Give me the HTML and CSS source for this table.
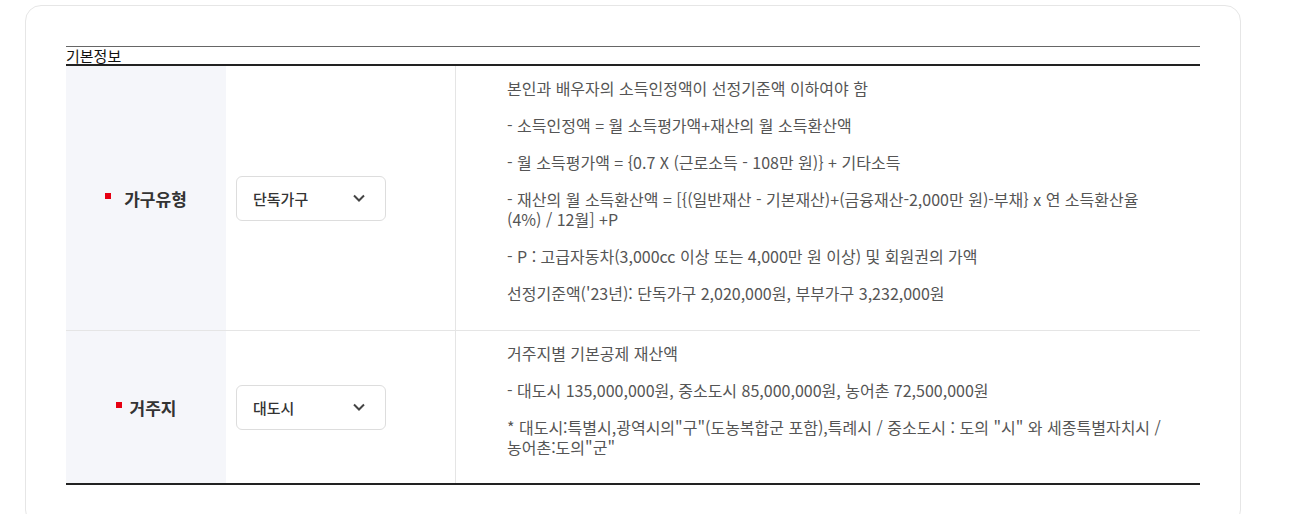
FILE: index.html
```html
<!DOCTYPE html>
<html lang="ko">
<head>
<meta charset="utf-8">
<title>기본정보</title>
<link rel="stylesheet" href="styles.css">
</head>
<body>
<div class="card">
  <div class="caption">기본정보</div>
  <div class="table">
    <div class="row">
      <div class="th"><span class="req"></span><span class="label label-wide">가구유형</span></div>
      <div class="td-select">
        <div class="select"><span>단독가구</span>
          <svg width="12" height="8" viewBox="0 0 12 8"><polyline points="1,1.5 6,6.5 11,1.5" fill="none" stroke="#444" stroke-width="2"/></svg>
        </div>
      </div>
      <div class="td-desc">
        <p>본인과 배우자의 소득인정액이 선정기준액 이하여야 함</p>
        <p>- 소득인정액 = 월 소득평가액+재산의 월 소득환산액</p>
        <p>- 월 소득평가액 = {0.7 X (근로소득 - 108만 원)} + 기타소득</p>
        <p>- 재산의 월 소득환산액 = [{(일반재산 - 기본재산)+(금융재산-2,000만 원)-부채} x 연 소득환산율 (4%) / 12월] +P</p>
        <p>- P : 고급자동차(3,000cc 이상 또는 4,000만 원 이상) 및 회원권의 가액</p>
        <p>선정기준액('23년): 단독가구 2,020,000원, 부부가구 3,232,000원</p>
      </div>
    </div>
    <div class="row row-last">
      <div class="th"><span class="req"></span><span class="label">거주지</span></div>
      <div class="td-select">
        <div class="select"><span>대도시</span>
          <svg width="12" height="8" viewBox="0 0 12 8"><polyline points="1,1.5 6,6.5 11,1.5" fill="none" stroke="#444" stroke-width="2"/></svg>
        </div>
      </div>
      <div class="td-desc">
        <p>거주지별 기본공제 재산액</p>
        <p>- 대도시 135,000,000원, 중소도시 85,000,000원, 농어촌 72,500,000원</p>
        <p>* 대도시:특별시,광역시의"구"(도농복합군 포함),특례시 / 중소도시 : 도의 "시" 와 세종특별자치시 / 농어촌:도의"군"</p>
      </div>
    </div>
  </div>
</div>
</body>
</html>
```

FILE: styles.css
```css
html, body {
  margin: 0;
  padding: 0;
  background: #fff;
  overflow: hidden;
}
body {
  font-family: "Noto Sans CJK KR", "Noto Sans", sans-serif;
  color: #333;
}
.card {
  margin: 5px 0 0 25px;
  width: 1134px;
  padding: 40px;
  border: 1px solid #e6e6e6;
  border-radius: 16px;
}
.caption {
  border-top: 1px solid #666;
  border-bottom: 2px solid #222;
  font-size: 15px;
  line-height: 17px;
  color: #111;
}
.table {
  border-bottom: 2px solid #222;
}
.row {
  display: grid;
  grid-template-columns: 160px 230px 1fr;
  border-bottom: 1px solid #e5e5e5;
}
.row-last {
  border-bottom: none;
}
.th {
  background: #f5f6fa;
  display: flex;
  align-items: center;
  justify-content: center;
}
.req {
  width: 6px;
  height: 6px;
  background: #e60012;
  margin-bottom: 5px;
}
.label {
  margin-left: 8px;
  font-size: 17px;
  font-weight: 700;
  color: #333;
}
.label-wide {
  margin-left: 13px;
}
.td-select {
  border-right: 1px solid #e5e5e5;
  display: flex;
  align-items: center;
  padding-left: 10px;
}
.select {
  box-sizing: border-box;
  width: 150px;
  height: 45px;
  border: 1px solid #dddddd;
  border-radius: 6px;
  display: flex;
  align-items: center;
  justify-content: space-between;
  padding: 0 20px 0 16px;
  font-size: 15px;
  font-weight: 500;
  color: #333;
}
.td-desc {
  padding: 12px 35px 10px 51px;
  font-size: 16px;
  line-height: 20px;
  color: #555;
}
.td-desc p {
  margin: 0 0 17px;
}
.row-last .td-desc {
  padding-bottom: 9px;
}
```
